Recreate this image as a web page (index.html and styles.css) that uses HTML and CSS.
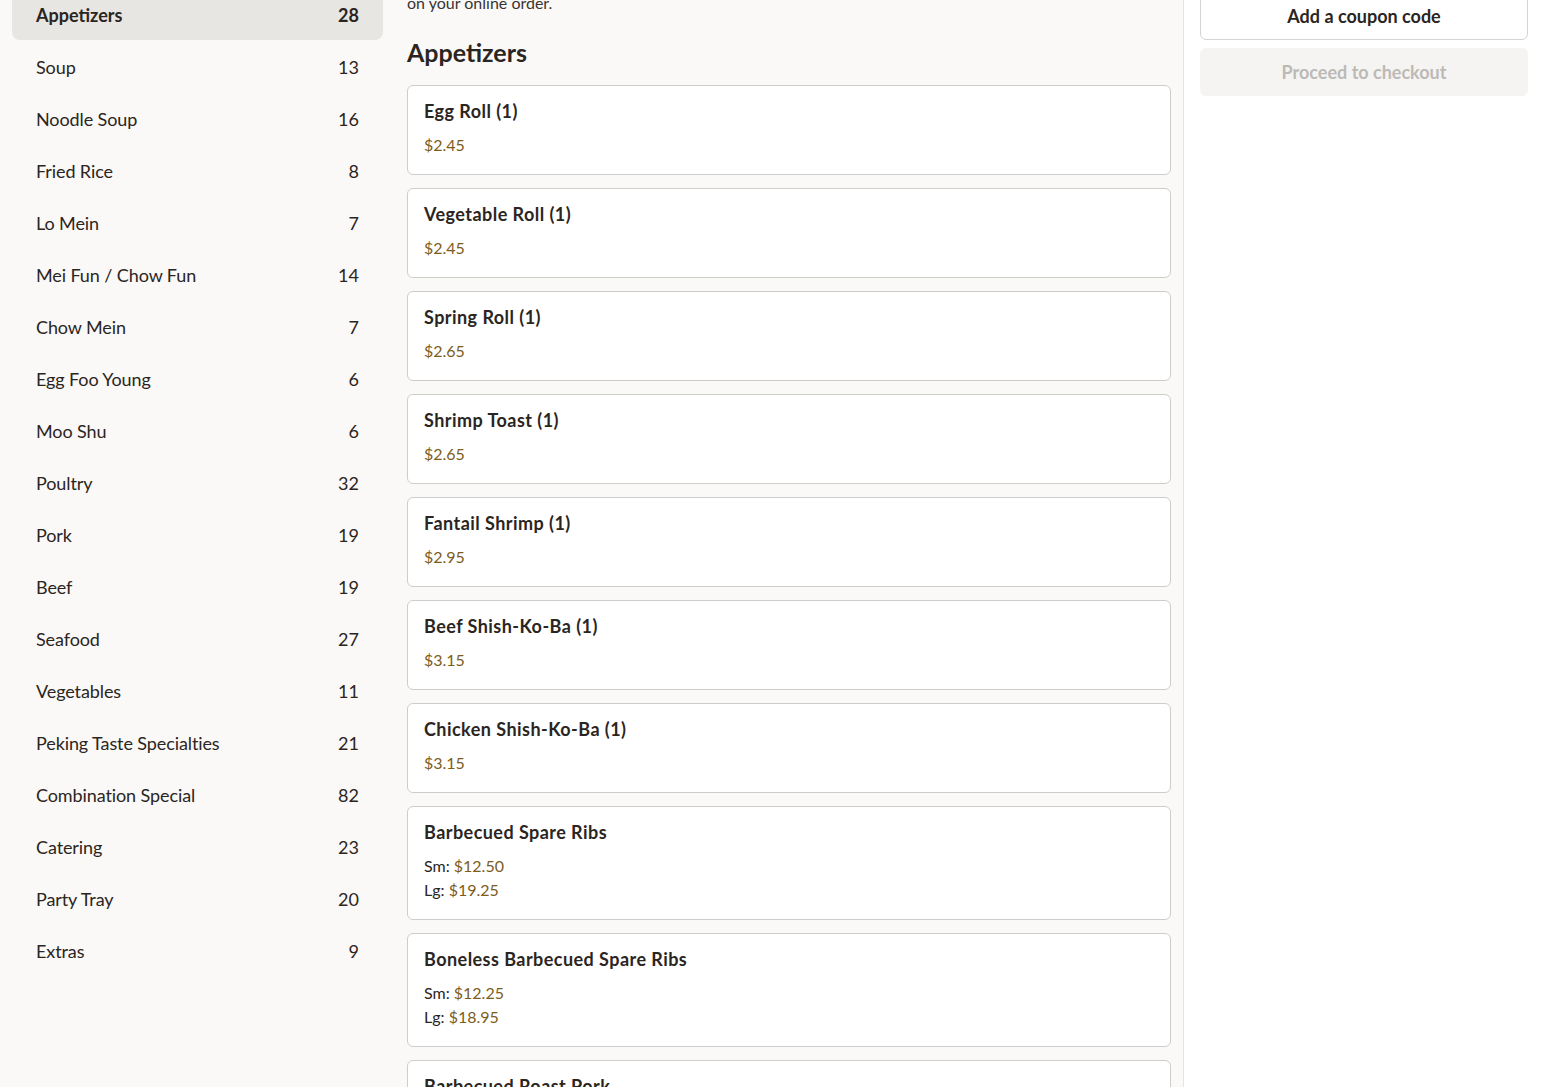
FILE: index.html
```html
<!DOCTYPE html>
<html lang="en">
<head>
<meta charset="utf-8">
<title>Menu</title>
<link rel="stylesheet" href="styles.css">
</head>
<body>
<div class="page">
  <aside class="sidebar">
    <nav class="cats">
      <a class="cat active"><span>Appetizers</span><span>28</span></a>
      <a class="cat"><span>Soup</span><span>13</span></a>
      <a class="cat"><span>Noodle Soup</span><span>16</span></a>
      <a class="cat"><span>Fried Rice</span><span>8</span></a>
      <a class="cat"><span>Lo Mein</span><span>7</span></a>
      <a class="cat"><span>Mei Fun / Chow Fun</span><span>14</span></a>
      <a class="cat"><span>Chow Mein</span><span>7</span></a>
      <a class="cat"><span>Egg Foo Young</span><span>6</span></a>
      <a class="cat"><span>Moo Shu</span><span>6</span></a>
      <a class="cat"><span>Poultry</span><span>32</span></a>
      <a class="cat"><span>Pork</span><span>19</span></a>
      <a class="cat"><span>Beef</span><span>19</span></a>
      <a class="cat"><span>Seafood</span><span>27</span></a>
      <a class="cat"><span>Vegetables</span><span>11</span></a>
      <a class="cat"><span>Peking Taste Specialties</span><span>21</span></a>
      <a class="cat"><span>Combination Special</span><span>82</span></a>
      <a class="cat"><span>Catering</span><span>23</span></a>
      <a class="cat"><span>Party Tray</span><span>20</span></a>
      <a class="cat"><span>Extras</span><span>9</span></a>
    </nav>
  </aside>
  <main class="menu">
    <p class="intro">Prices and availability may differ from the restaurant. Tax and fees will be shown<br>on your online order.</p>
    <h2 class="section-title">Appetizers</h2>
    <div class="items">
      <div class="item"><h3>Egg Roll (1)</h3><div class="price">$2.45</div></div>
      <div class="item"><h3>Vegetable Roll (1)</h3><div class="price">$2.45</div></div>
      <div class="item"><h3>Spring Roll (1)</h3><div class="price">$2.65</div></div>
      <div class="item"><h3>Shrimp Toast (1)</h3><div class="price">$2.65</div></div>
      <div class="item"><h3>Fantail Shrimp (1)</h3><div class="price">$2.95</div></div>
      <div class="item"><h3>Beef Shish-Ko-Ba (1)</h3><div class="price">$3.15</div></div>
      <div class="item"><h3>Chicken Shish-Ko-Ba (1)</h3><div class="price">$3.15</div></div>
      <div class="item"><h3>Barbecued Spare Ribs</h3><div class="price"><span class="size">Sm: </span>$12.50</div><div class="price"><span class="size">Lg: </span>$19.25</div></div>
      <div class="item"><h3>Boneless Barbecued Spare Ribs</h3><div class="price"><span class="size">Sm: </span>$12.25</div><div class="price"><span class="size">Lg: </span>$18.95</div></div>
      <div class="item"><h3>Barbecued Roast Pork</h3><div class="price"><span class="size">Sm: </span>$9.95</div><div class="price"><span class="size">Lg: </span>$17.95</div></div>
    </div>
  </main>
  <aside class="cart">
    <button class="btn coupon">Add a coupon code</button>
    <button class="btn checkout" disabled>Proceed to checkout</button>
  </aside>
</div>
</body>
</html>
```
FILE: styles.css
```css
* { box-sizing: border-box; }
html, body { margin: 0; padding: 0; height: 100%; overflow: hidden; }
body {
  font-family: Lato, "Noto Sans", sans-serif;
  color: #2b2522;
  background: #ffffff;
}
.page {
  display: flex;
  align-items: stretch;
  margin-top: -48px;
  height: calc(100% + 48px);
}
.sidebar {
  width: 395px;
  flex: none;
  background: #faf9f7;
  padding: 37px 12px 0 12px;
}
.cats { display: flex; flex-direction: column; }
.cat {
  display: flex;
  justify-content: space-between;
  align-items: center;
  height: 52px;
  padding: 0 24px;
  border-radius: 8px;
  font-size: 18px;
  color: #2b2522;
}
.cat:not(.active) span:first-child { letter-spacing: -0.1px; }
.cat.active { background: #e7e6e3; font-weight: 700; height: 51px; margin-bottom: 1px; }
.menu {
  width: 789px;
  flex: none;
  background: #faf9f7;
  border-right: 1px solid #e6e4e1;
  padding: 15px 12px 0 12px;
}
.intro { margin: 0; font-size: 16px; line-height: 24px; color: #3a3431; }
.section-title {
  margin: 21px 0 17px 0;
  font-size: 25px;
  line-height: 32px;
  font-weight: 700;
  color: #2b2522;
}
.items { display: flex; flex-direction: column; gap: 13px; }
.item {
  background: #fff;
  border: 1px solid #cfcdca;
  border-radius: 6px;
  padding: 15px 16px 17px 16px;
}
.item h3 {
  margin: 0 0 12px 0;
  font-size: 18px;
  line-height: 20px;
  font-weight: 700;
  letter-spacing: 0.45px;
  color: #2b2522;
}
.price { font-size: 16px; line-height: 24px; color: #7d5d1c; }
.size { color: #2b2522; }
.cart {
  flex: 1;
  background: #fff;
  padding: 40px 16px 0 16px;
  display: flex;
  flex-direction: column;
  gap: 8px;
}
.btn {
  height: 48px;
  width: 100%;
  border-radius: 6px;
  font-family: inherit;
  font-size: 18px;
  font-weight: 700;
}
.coupon { background: #fff; border: 1px solid #d6d4d1; color: #2b2522; padding-bottom: 2px; }
.checkout { background: #f5f4f2; border: none; color: #bcbab6; padding-bottom: 2px; }
```
